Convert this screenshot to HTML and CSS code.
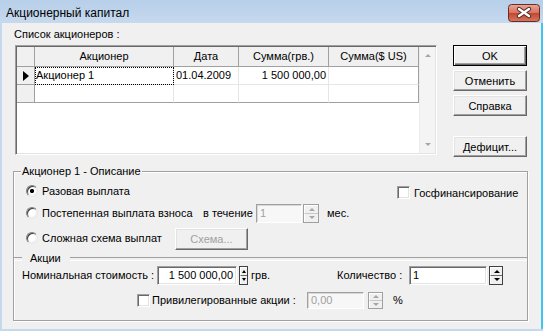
FILE: index.html
```html
<!DOCTYPE html>
<html lang="ru">
<head>
  <meta charset="UTF-8" />
  <title>Акционерный капитал</title>
  <link rel="stylesheet" href="styles.css">
</head>
<body>
  <div class="window">
    <div class="titlebar">
      <span class="title">Акционерный капитал</span>
      <span class="close">
        <svg width="32" height="18" viewBox="0 0 32 18">
          <defs>
            <linearGradient id="closeGrad" x1="0" y1="0" x2="0" y2="1">
              <stop offset="0" stop-color="#e9a797"/>
              <stop offset="0.48" stop-color="#d67563"/>
              <stop offset="0.52" stop-color="#c4472f"/>
              <stop offset="1" stop-color="#d37a5f"/>
            </linearGradient>
          </defs>
          <rect x="0.5" y="0.5" width="31" height="17" rx="3" fill="url(#closeGrad)" stroke="#6b2a22"/>
          <path d="M11 5 L21 12 M21 5 L11 12" stroke="#4d2a26" stroke-width="4.4" stroke-linecap="round"/>
          <path d="M11 5 L21 12 M21 5 L11 12" stroke="#fff" stroke-width="2.4" stroke-linecap="round"/>
        </svg>
      </span>
    </div>

    <div class="client">
      <div class="top">
        <div class="list-col">
          <div class="caption">Список акционеров :</div>
          <div class="grid">
            <div class="cells">
              <div class="cell head ind"></div>
              <div class="cell head">Акционер</div>
              <div class="cell head">Дата</div>
              <div class="cell head">Сумма(грв.)</div>
              <div class="cell head last-col">Сумма($ US)</div>

              <div class="cell ind"><span class="row-mark"></span></div>
              <div class="cell focus">Акционер 1</div>
              <div class="cell">01.04.2009</div>
              <div class="cell num">1 500 000,00</div>
              <div class="cell last-col"></div>

              <div class="cell ind last-row"></div>
              <div class="cell last-row"></div>
              <div class="cell last-row"></div>
              <div class="cell last-row"></div>
              <div class="cell last-row last-col"></div>
            </div>
            <div class="vscroll">
              <span class="tri-up"></span>
              <span class="tri-down"></span>
            </div>
          </div>
        </div>

        <div class="buttons">
          <button class="btn btn-default">OK</button>
          <button class="btn">Отменить</button>
          <button class="btn">Справка</button>
          <button class="btn btn-gap">Дефицит...</button>
        </div>
      </div>

      <fieldset class="group">
        <legend>Акционер 1 - Описание</legend>

        <div class="row r1">
          <span class="radio on"></span>
          <span class="opt opt-1">Разовая выплата</span>
          <span class="check"></span>
          <span class="check-label">Госфинансирование</span>
        </div>

        <div class="row r2">
          <span class="radio"></span>
          <span class="opt opt-2">Постепенная выплата взноса</span>
          <span class="during">в течение</span>
          <span class="edit dis months">1</span>
          <span class="spin dis spin-months"><span class="half"><i class="tri-up"></i></span><span class="half"><i class="tri-down"></i></span></span>
          <span class="unit-months">мес.</span>
        </div>

        <div class="row r3">
          <span class="radio"></span>
          <span class="opt opt-3">Сложная схема выплат</span>
          <button class="btn dis scheme">Схема...</button>
        </div>

        <div class="sep"><span class="sep-label">Акции</span></div>

        <div class="row r4">
          <span class="nominal-label">Номинальная стоимость :</span>
          <span class="edit nominal num">1 500 000,00</span>
          <span class="spin spin-nominal"><span class="half"><i class="tri-up"></i></span><span class="half"><i class="tri-down"></i></span></span>
          <span class="unit-grv">грв.</span>
          <span class="qty-label">Количество :</span>
          <span class="edit qty">1</span>
          <span class="spin spin-qty"><span class="half"><i class="tri-up"></i></span><span class="half"><i class="tri-down"></i></span></span>
        </div>

        <div class="row r5">
          <span class="check pref-check"></span>
          <span class="pref-label">Привилегированные акции :</span>
          <span class="edit dis pref">0,00</span>
          <span class="spin dis spin-pref"><span class="half"><i class="tri-up"></i></span><span class="half"><i class="tri-down"></i></span></span>
          <span class="unit-pct">%</span>
        </div>
      </fieldset>
    </div>
  </div>
</body>
</html>
```

FILE: styles.css
```css
* {
  box-sizing: border-box;
}

body {
  margin: 0;
  font-family: "Liberation Sans", Arial, sans-serif;
  font-size: 11px;
  color: #000;
  background: #c4d8ee;
}

.window {
  width: 543px;
  height: 331px;
  display: flex;
  flex-direction: column;
  background: #c4d8ee;
}

/* title bar */
.titlebar {
  height: 23px;
  display: flex;
  align-items: flex-start;
  background: linear-gradient(#b7cfe9, #c6d9ee);
}

.title {
  margin: 6px 0 0 6px;
  font-size: 12px;
  line-height: 14px;
}

.close {
  margin: 4px 3px 0 auto;
  height: 18px;
}

.client {
  margin-left: 2px;
  height: 306px;
  background: #f0f0f0;
  border-right: 2px solid #3fc3f1;
  padding: 0 13px 0 11px;
}

/* shareholder list */
.top {
  display: flex;
  height: 141px;
  padding-top: 5px;
}

.list-col {
  width: 424px;
}

.caption {
  margin-left: 1px;
  line-height: 13px;
}

.grid {
  margin: 4px 0 0 2px;
  width: 422px;
  height: 110px;
  display: flex;
  padding: 1px;
  border: 1px solid;
  border-color: #a0a0a0 #fff #fff #a0a0a0;
  box-shadow: inset 1px 1px #696969, inset -1px -1px #e3e3e3;
  background: #fff;
}

.cells {
  width: 402px;
  display: grid;
  grid-template-columns: 18px 139px 65px 90px 90px;
  grid-template-rows: 20px;
  grid-auto-rows: 18px;
  align-content: start;
}

.cell {
  padding: 0 2px;
  line-height: 17px;
  white-space: nowrap;
  overflow: hidden;
  border-right: 1px solid #e6e6e6;
  border-bottom: 1px solid #e6e6e6;
}

.cell.head {
  background: #f0f0f0;
  border-color: #a0a0a0;
  text-align: center;
  line-height: 19px;
}

.cell.ind {
  background: #f0f0f0;
  border-color: #a0a0a0;
  display: flex;
  align-items: center;
  padding-left: 6px;
}

.cell.last-col {
  border-right-color: #a0a0a0;
}

.cell.last-row {
  border-bottom-color: #a0a0a0;
}

.cell.num {
  text-align: right;
  padding-right: 2px;
}

.cell.focus {
  outline: 1px dotted #000;
  outline-offset: -1px;
  padding-left: 1px;
}

.row-mark {
  width: 0;
  height: 0;
  border-left: 6px solid #000;
  border-top: 5px solid transparent;
  border-bottom: 5px solid transparent;
}

.vscroll {
  width: 16px;
  background: #f4f4f4;
  border-left: 1px solid #ececec;
  display: flex;
  flex-direction: column;
  justify-content: space-between;
  align-items: center;
  padding: 7px 0;
}

.tri-up,
.tri-down {
  display: block;
  width: 0;
  height: 0;
  border-left: 3px solid transparent;
  border-right: 3px solid transparent;
}

.tri-up {
  border-bottom: 3px solid #000;
}

.tri-down {
  border-top: 3px solid #000;
}

.vscroll .tri-up {
  border-bottom-color: #a6a6a6;
}

.vscroll .tri-down {
  border-top-color: #a6a6a6;
}

/* buttons */
.buttons {
  margin-left: 16px;
  padding-top: 17px;
  width: 74px;
  display: flex;
  flex-direction: column;
}

.btn {
  height: 21px;
  margin: 0 0 4px;
  padding: 0;
  font: inherit;
  color: #000;
  background: #f0f0f0;
  border: 1px solid;
  border-color: #fff #696969 #696969 #fff;
  box-shadow: inset -1px -1px #a0a0a0, inset 1px 1px #e3e3e3;
}

.btn-default {
  border-color: #000;
  box-shadow: inset 1px 1px #fff, inset -1px -1px #696969, inset -2px -2px #a0a0a0;
}

.btn-gap {
  margin-top: 16px;
}

.btn.dis {
  color: #a0a0a0;
}

/* description group */
.group {
  margin: 0;
  padding: 0;
  width: 515px;
  height: 157px;
  min-width: 0;
  border: 1px solid #a0a0a0;
  box-shadow: inset 1px 1px #fff, 1px 1px #fff;
}

.group legend {
  margin-left: 7px;
  padding: 0 1px;
  line-height: 14px;
  background: #f0f0f0;
}

.row {
  display: flex;
  align-items: center;
  white-space: nowrap;
}

.r1 {
  height: 22px;
  margin-top: 2px;
  padding-left: 12px;
}

.r2 {
  height: 22px;
  padding-left: 12px;
}

.r3 {
  height: 24px;
  margin-top: 2px;
  padding-left: 12px;
}

.r4 {
  height: 20px;
  padding-left: 8px;
}

.r5 {
  height: 20px;
  margin-top: 5px;
  padding-left: 123px;
}

.radio {
  width: 12px;
  height: 12px;
  margin-right: 4px;
  border-radius: 50%;
  border: 1px solid;
  border-color: #808080 #e8e8e8 #e8e8e8 #808080;
  background: radial-gradient(circle at 45% 45%, #fff 0, #fff 35%, #e6e6e6 100%);
  box-shadow: inset 1px 1px #404040;
}

.radio.on {
  background: radial-gradient(circle at 50% 50%, #000 0, #000 1.8px, #fff 2.4px, #fff 35%, #e6e6e6 100%);
}

.opt-1 {
  width: 355px;
}

.opt-2 {
  width: 161px;
}

.opt-3 {
  width: 133px;
}

.check {
  width: 13px;
  height: 13px;
  background: #fff;
  border: 1px solid;
  border-color: #a0a0a0 #fff #fff #a0a0a0;
  box-shadow: inset 1px 1px #696969, inset -1px -1px #e3e3e3;
}

.r1 .check {
  margin-top: 3px;
}

.check-label {
  margin: 3px 0 0 4px;
}

.during {
  width: 53px;
}

.edit {
  height: 19px;
  padding: 0 3px;
  line-height: 17px;
  background: #fff;
  border: 1px solid;
  border-color: #a0a0a0 #fff #fff #a0a0a0;
  box-shadow: inset 1px 1px #696969, inset -1px -1px #e3e3e3;
}

.edit.dis {
  color: #a0a0a0;
  background: #f7f7f7;
  box-shadow: inset 1px 1px #d8d8d8;
}

.edit.num {
  text-align: right;
}

.months {
  width: 46px;
}

.spin {
  height: 19px;
  display: flex;
  flex-direction: column;
  background: #f0f0f0;
  border: 1px solid #404040;
}

.spin .half {
  flex: 1;
  display: flex;
  align-items: center;
  justify-content: center;
  border-top: 1px solid #fff;
  border-left: 1px solid #fff;
}

.spin .half + .half {
  border-top: 1px solid #696969;
}

.spin.dis {
  border-color: #a0a0a0;
}

.spin.dis .half + .half {
  border-top-color: #c8c8c8;
}

.spin.dis .tri-up {
  border-bottom-color: #a6a6a6;
}

.spin.dis .tri-down {
  border-top-color: #a6a6a6;
}

.spin-months {
  width: 16px;
  margin-left: 1px;
}

.unit-months {
  margin-left: 8px;
}

.scheme {
  width: 73px;
  height: 22px;
  margin: 2px 0 0;
}

.sep {
  height: 14px;
  margin-top: 1px;
  display: flex;
  align-items: center;
}

.sep::before,
.sep::after {
  content: "";
  height: 2px;
  margin-top: 2px;
  border-top: 1px solid #a0a0a0;
  border-bottom: 1px solid #fff;
}

.sep::before {
  width: 8px;
}

.sep::after {
  flex: 1;
}

.sep-label {
  padding: 0 9px 0 8px;
}

.nominal-label {
  width: 135px;
}

.nominal {
  width: 80px;
}

.spin-nominal {
  width: 9px;
  margin-left: 2px;
}

.spin-nominal .tri-up,
.spin-nominal .tri-down {
  border-left-width: 2px;
  border-right-width: 2px;
}

.unit-grv {
  width: 86px;
  margin-left: 3px;
}

.qty-label {
  width: 72px;
}

.qty {
  width: 78px;
}

.spin-qty {
  width: 14px;
  margin-left: 2px;
}

.pref-label {
  width: 155px;
  margin-left: 2px;
}

.pref {
  width: 57px;
  height: 17px;
  line-height: 15px;
}

.spin-pref {
  width: 15px;
  height: 17px;
  margin-left: 4px;
}

.unit-pct {
  margin-left: 10px;
}
```
